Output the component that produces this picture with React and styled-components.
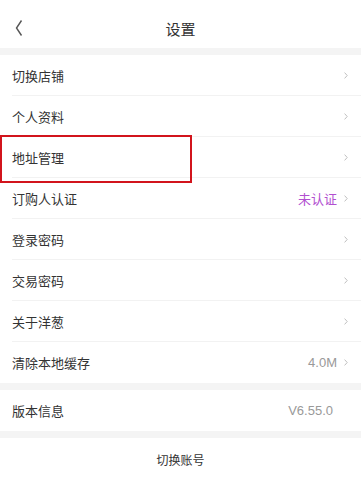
import React from "react";
import styled, { createGlobalStyle } from "styled-components";

const Global = createGlobalStyle`
  html, body { margin: 0; padding: 0; background: #f4f4f4; }
  body { font-family: "Noto Sans CJK SC", "Noto Sans", sans-serif; }
`;

const Page = styled.div`
  width: 361px;
  min-height: 480px;
  background: #f4f4f4;
  display: flex;
  flex-direction: column;
`;

const Header = styled.div`
  height: 48px;
  background: #fff;
  display: flex;
  align-items: center;
  justify-content: center;
  position: relative;
  margin-bottom: 7px;
`;

const BackBtn = styled.div`
  position: absolute;
  left: 14px;
  top: 19px;
  width: 10px;
  height: 18px;
  display: flex;
`;

const Title = styled.div`
  font-size: 15px;
  color: #333;
  line-height: 1;
  margin-top: 8px;
`;

const Group = styled.div`
  background: #fff;
  margin-bottom: ${(p) => p.$gap || 0}px;
`;

const Row = styled.div`
  height: 41px;
  margin-left: 12px;
  padding-right: 13px;
  display: flex;
  align-items: center;
  border-bottom: ${(p) => (p.$last ? "none" : "1px solid #f2f2f2")};
  position: relative;
  box-sizing: border-box;
`;

const Label = styled.div`
  flex: 1;
  font-size: 13px;
  color: #333;
`;

const Value = styled.div`
  font-size: 13px;
  color: ${(p) => p.$color || "#999"};
  font-family: ${(p) => (p.$latin ? '"Liberation Sans", Arial, sans-serif' : "inherit")};
  margin-right: ${(p) => (p.$noArrow ? 15 : 7)}px;
`;

const Chevron = styled.svg`
  width: 4px;
  height: 7px;
  flex: none;
`;

const Highlight = styled.div`
  position: absolute;
  left: -12px;
  top: -2px;
  width: 192px;
  height: 48px;
  border: 2.5px solid #d2141c;
  box-sizing: border-box;
  pointer-events: none;
`;

const Footer = styled.div`
  background: #fff;
  display: flex;
  justify-content: center;
  font-size: 12px;
  color: #333;
  flex: 1;
  align-items: flex-start;
  padding-top: 13px;
  box-sizing: border-box;
`;

const Arrow = () => (
  <Chevron viewBox="0 0 4 7">
    <path d="M0.6 0.6 L3.2 3.5 L0.6 6.4" fill="none" stroke="#b8b8b8" strokeWidth="0.9" />
  </Chevron>
);

const items = [
  { label: "切换店铺" },
  { label: "个人资料" },
  { label: "地址管理", highlight: true },
  { label: "订购人认证", value: "未认证", color: "#b24fd0" },
  { label: "登录密码" },
  { label: "交易密码" },
  { label: "关于洋葱" },
  { label: "清除本地缓存", value: "4.0M", latin: true },
];

export default function App() {
  return (
    <Page>
      <Global />
      <Header>
        <BackBtn>
          <svg width="10" height="18" viewBox="0 0 10 18">
            <path d="M7.5 1.5 L2.5 9 L7.5 16.5" fill="none" stroke="#555" strokeWidth="1.4" />
          </svg>
        </BackBtn>
        <Title>设置</Title>
      </Header>
      <Group $gap={7}>
        {items.map((it, i) => (
          <Row key={it.label} $last={i === items.length - 1}>
            <Label>{it.label}</Label>
            {it.value && (
              <Value $color={it.color} $latin={it.latin}>
                {it.value}
              </Value>
            )}
            <Arrow />
            {it.highlight && <Highlight />}
          </Row>
        ))}
      </Group>
      <Group $gap={7}>
        <Row $last>
          <Label>版本信息</Label>
          <Value $latin $noArrow>V6.55.0</Value>
        </Row>
      </Group>
      <Footer>切换账号</Footer>
    </Page>
  );
}
